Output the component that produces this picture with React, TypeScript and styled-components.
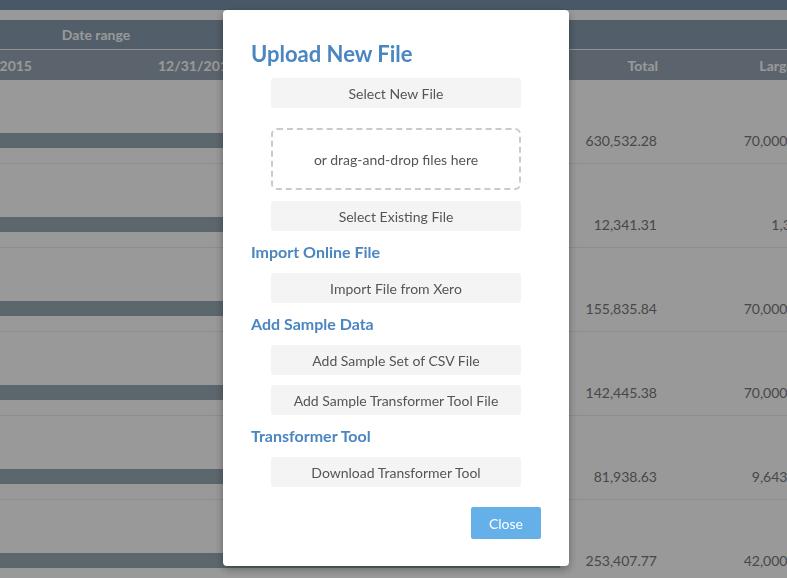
import React from 'react';
import styled, { createGlobalStyle } from 'styled-components';

const GlobalStyle = createGlobalStyle`
  html, body {
    margin: 0;
    padding: 0;
  }
  body {
    width: 787px;
    height: 578px;
    overflow: hidden;
    background: #fff;
    font-family: Lato, 'Open Sans', 'Liberation Sans', sans-serif;
  }
`;

const columns = '91px 203px 317px 105px 142px';

const Page = styled.div`
  height: 578px;
  overflow: hidden;
`;

const TopBar = styled.div`
  height: 10px;
  background: #7b93ac;
  margin-bottom: 10px;
`;

const Table = styled.div`
  margin-left: -51px;
  width: 858px;
`;

const HeadRow = styled.div<{ $bg: string; $line?: boolean }>`
  display: grid;
  grid-template-columns: ${columns};
  align-items: center;
  box-sizing: border-box;
  height: 30px;
  background: ${(p) => p.$bg};
  border-bottom: ${(p) => (p.$line ? '1px solid #f2f2f2' : 'none')};
  color: #fff;
  font-size: 14px;
  font-weight: 700;
`;

const HeadCell = styled.div<{ $span?: string; $align?: string; $pad?: number }>`
  grid-column: ${(p) => p.$span || 'auto'};
  text-align: ${(p) => p.$align || 'right'};
  padding-right: ${(p) => (p.$align === 'center' ? 0 : p.$pad ?? 7)}px;
  white-space: nowrap;
`;

const Row = styled.div`
  display: grid;
  grid-template-columns: ${columns};
  align-items: end;
  box-sizing: border-box;
  height: 84px;
  padding-bottom: 15px;
  border-bottom: 1px solid #ececec;
`;

const Bar = styled.div`
  grid-column: 1 / 4;
  height: 15px;
  background: #99acb6;
`;

const Num = styled.div<{ $col: number; $pad?: number }>`
  grid-column: ${(p) => p.$col};
  text-align: right;
  padding-right: ${(p) => p.$pad ?? 8}px;
  font-size: 14px;
  line-height: 15px;
  color: #787878;
  white-space: nowrap;
`;

const Backdrop = styled.div`
  position: fixed;
  inset: 0;
  background: rgba(0, 0, 0, 0.4);
  display: flex;
  justify-content: center;
  align-items: flex-start;
  padding: 10px 0 0 5px;
`;

const Modal = styled.div`
  width: 346px;
  box-sizing: border-box;
  background: #fff;
  border-radius: 4px;
  box-shadow: 0 3px 9px rgba(0, 0, 0, 0.35);
  padding: 31px 28px 27px;
  display: flex;
  flex-direction: column;
`;

const Title = styled.h2`
  margin: 0;
  font-size: 22px;
  line-height: 26px;
  font-weight: 700;
  color: #4a86c1;
`;

const Heading = styled.h3`
  margin: 11px 0 0;
  font-size: 16px;
  line-height: 20px;
  font-weight: 700;
  color: #4a86c1;
`;

const Action = styled.button<{ $top?: number }>`
  align-self: center;
  width: 250px;
  height: 30px;
  margin-top: ${(p) => p.$top ?? 11}px;
  border: none;
  border-radius: 3px;
  background: #f4f4f4;
  color: #555;
  font-family: inherit;
  font-size: 14px;
  padding: 0;
  cursor: pointer;
`;

const DropZone = styled.div`
  align-self: center;
  width: 250px;
  height: 62px;
  box-sizing: border-box;
  margin-top: 20px;
  border: 2px dashed #cacaca;
  border-radius: 6px;
  display: flex;
  align-items: center;
  justify-content: center;
  color: #555;
  font-size: 14px;
`;

const CloseButton = styled.button`
  align-self: flex-end;
  width: 70px;
  height: 32px;
  margin-top: 20px;
  border: none;
  border-radius: 2px;
  background: #66b0ea;
  color: #fff;
  font-family: inherit;
  font-size: 14px;
  cursor: pointer;
`;

const rows = [
  { total: '630,532.28', large: '70,000.00' },
  { total: '12,341.31', large: '1,310' },
  { total: '155,835.84', large: '70,000.00' },
  { total: '142,445.38', large: '70,000.00' },
  { total: '81,938.63', large: '9,643.21' },
  { total: '253,407.77', large: '42,000.00' },
];

const App = () => (
  <Page>
    <GlobalStyle />
    <TopBar />
    <Table>
      <HeadRow $bg="#899db1" $line>
        <HeadCell $span="1 / 3" $align="center">
          Date range
        </HeadCell>
      </HeadRow>
      <HeadRow $bg="#98a7b6">
        <HeadCell $pad={8}>01/01/2015</HeadCell>
        <HeadCell>12/31/2015</HeadCell>
        <HeadCell />
        <HeadCell>Total</HeadCell>
        <HeadCell $pad={2}>Largest</HeadCell>
      </HeadRow>
      {rows.map((r) => (
        <Row key={r.total}>
          <Bar />
          <Num $col={4}>{r.total}</Num>
          <Num $col={5} $pad={0}>
            {r.large}
          </Num>
        </Row>
      ))}
    </Table>

    <Backdrop>
      <Modal>
        <Title>Upload New File</Title>
        <Action $top={11}>Select New File</Action>
        <DropZone>or drag-and-drop files here</DropZone>
        <Action>Select Existing File</Action>

        <Heading>Import Online File</Heading>
        <Action>Import File from Xero</Action>

        <Heading>Add Sample Data</Heading>
        <Action>Add Sample Set of CSV File</Action>
        <Action $top={10}>Add Sample Transformer Tool File</Action>

        <Heading>Transformer Tool</Heading>
        <Action>Download Transformer Tool</Action>

        <CloseButton>Close</CloseButton>
      </Modal>
    </Backdrop>
  </Page>
);

export default App;
